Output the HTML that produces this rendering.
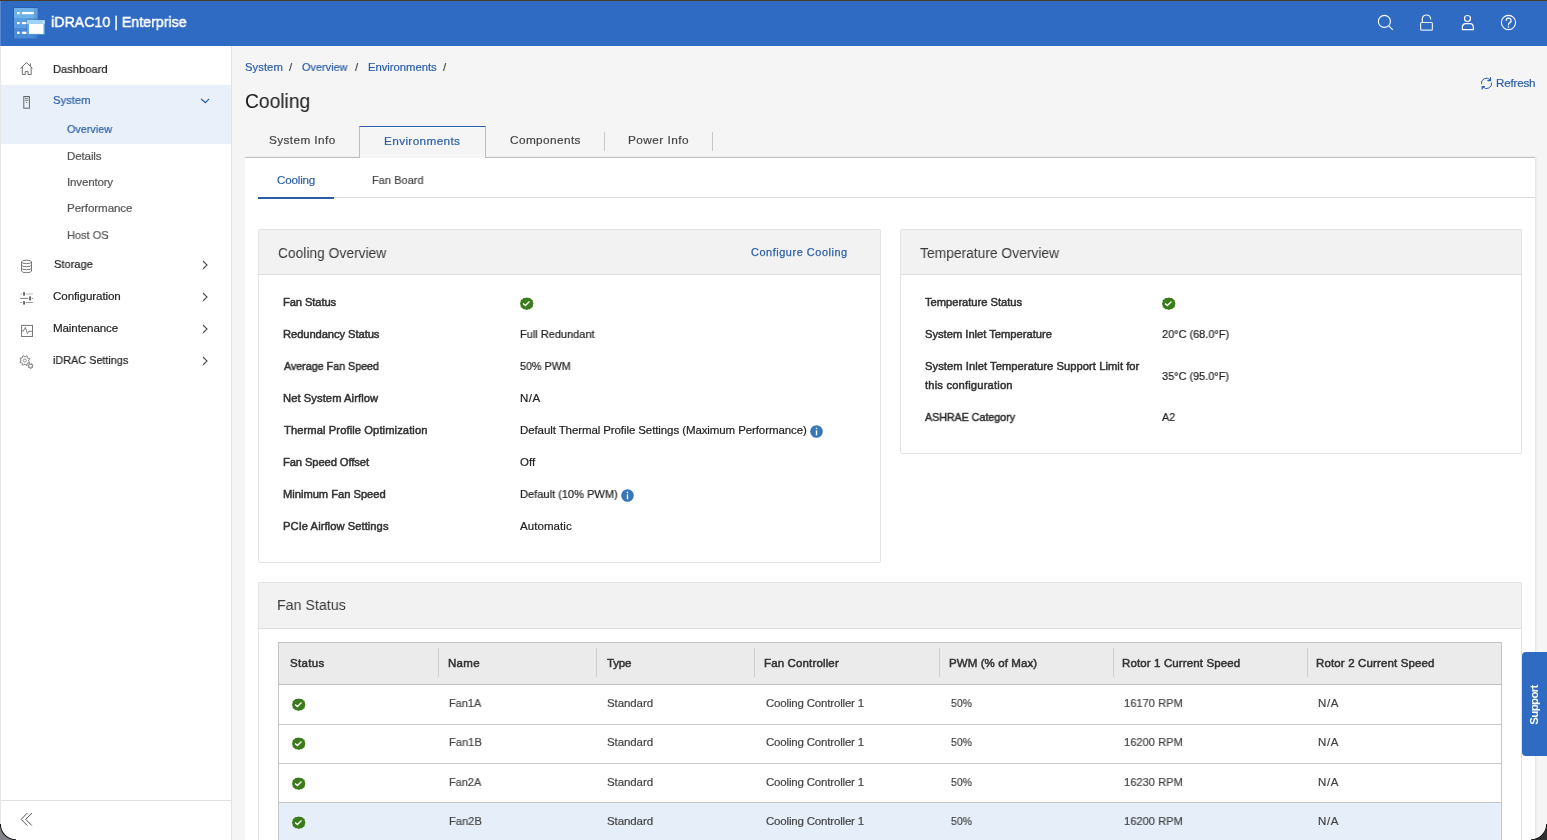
<!DOCTYPE html>
<html><head><meta charset="utf-8"><title>iDRAC10 Cooling</title>
<style>
html,body{margin:0;padding:0;width:1547px;height:840px;overflow:hidden;font-family:"Liberation Sans", sans-serif;}
.t{position:absolute;white-space:nowrap;will-change:transform;}
.r{position:absolute;}
svg.r{overflow:visible}
</style></head><body>
<div class="r" style="left:0px;top:0px;width:1547px;height:840px;background:#f5f5f5"></div>
<div class="r" style="left:0px;top:0px;width:1547px;height:1px;background:#4a3b26"></div>
<div class="r" style="left:0px;top:1px;width:1547px;height:45px;background:#2f6bc3"></div>
<div class="r" style="left:0px;top:46px;width:231px;height:794px;background:#fff;border-right:1px solid #e3e3e3"></div>
<div class="r" style="left:0px;top:46px;width:1px;height:794px;background:#e6e6e6"></div>
<div class="r" style="left:0px;top:1px;width:1px;height:45px;background:rgba(255,255,255,0.2)"></div>
<div class="r" style="left:1px;top:85px;width:230px;height:59px;background:#e9f0f9"></div>
<div class="r" style="left:1px;top:800px;width:230px;height:1px;background:#e0e0e0"></div>
<svg class="r" style="left:13px;top:7px" width="34" height="32" viewBox="0 0 34 32">
<rect x="0.4" y="0.4" width="24.4" height="31.4" fill="#2a5aa5"/>
<rect x="1" y="1" width="23.5" height="30.6" fill="#4a8ad6"/>
<rect x="1" y="1" width="23.5" height="10.3" fill="#6db1e9"/>
<rect x="1" y="11.3" width="23.5" height="9.7" fill="#5b9fe0"/>
<rect x="20.8" y="1" width="3.7" height="30.6" fill="#2a5aa5" fill-opacity="0.18"/>
<rect x="4" y="5" width="2.7" height="2.2" fill="#fff"/><rect x="8.9" y="5" width="12.1" height="2.2" fill="#fff"/>
<rect x="4" y="15" width="2.7" height="2.1" fill="#fff"/><rect x="8.9" y="15" width="4.6" height="2.1" fill="#fff"/>
<rect x="4" y="24.7" width="2.7" height="2.2" fill="#fff"/><rect x="8.9" y="24.7" width="4.6" height="2.2" fill="#fff"/>
<rect x="13.6" y="12.6" width="18.8" height="15.4" fill="#2a5aa5" fill-opacity="0.5"/>
<rect x="14" y="13" width="18" height="14.7" fill="#5da3e2"/>
<rect x="14" y="13" width="18" height="4" fill="#9fd2f4"/>
<rect x="29.2" y="14.5" width="2" height="1.7" fill="#c8e6fa"/>
<rect x="15.9" y="17" width="14.6" height="9.9" fill="#fff"/>
</svg>
<div class="t" style="left:50.9px;top:13px;font-size:15.5px;line-height:17px;color:#fff;-webkit-text-stroke:0.5px currentColor;transform:scaleX(0.9171);transform-origin:0 0;">iDRAC10 | Enterprise</div>
<svg class="r" style="left:1376px;top:14px" width="18" height="18" viewBox="0 0 18 18"><circle cx="8.4" cy="7.4" r="6.0" fill="none" stroke="#fff" stroke-width="1.1"/><line x1="12.6" y1="11.6" x2="16.8" y2="15.9" stroke="#fff" stroke-width="1.1"/></svg>
<svg class="r" style="left:1419px;top:14px" width="16" height="18" viewBox="0 0 16 18"><path d="M3.3 8.3 V4.9 A4.2 4.2 0 0 1 11.6 4.3 V5.6" fill="none" stroke="#fff" stroke-width="1.15"/><rect x="1.6" y="8.5" width="11.8" height="7.7" rx="1" fill="none" stroke="#fff" stroke-opacity="0.85" stroke-width="1.2"/></svg>
<svg class="r" style="left:1460px;top:14px" width="16" height="18" viewBox="0 0 16 18"><circle cx="7.5" cy="4.5" r="3.0" fill="none" stroke="#fff" stroke-width="1.15"/><path d="M2.4 15.6 V12.6 A3.4 3.4 0 0 1 5.6 9.6 H9.6 A3.4 3.4 0 0 1 13.3 12.6 V15.6 Z" fill="none" stroke="#fff" stroke-width="1.2"/></svg>
<svg class="r" style="left:1500px;top:14px" width="18" height="18" viewBox="0 0 18 18"><circle cx="8.5" cy="8.5" r="7.1" fill="none" stroke="#fff" stroke-width="1.1"/><path d="M6.3 6.8 A2.4 2.4 0 1 1 9.3 8.9 C8.6 9.3 8.4 9.7 8.4 11.3" fill="none" stroke="#fff" stroke-width="1.2"/><circle cx="8.4" cy="13.0" r="0.8" fill="#fff"/></svg>
<div class="t" style="left:53.08px;top:63px;font-size:11.6px;line-height:12px;color:#222;-webkit-text-stroke:0.2px currentColor;transform:scaleX(0.9629);transform-origin:0 0;">Dashboard</div>
<div class="t" style="left:53.49px;top:94px;font-size:11.6px;line-height:12px;color:#2b5ea8;-webkit-text-stroke:0.2px currentColor;transform:scaleX(0.9712);transform-origin:0 0;">System</div>
<div class="t" style="left:67.39px;top:123px;font-size:11.6px;line-height:12px;color:#2b5ea8;-webkit-text-stroke:0.2px currentColor;transform:scaleX(0.9308);transform-origin:0 0;">Overview</div>
<div class="t" style="left:66.75px;top:150px;font-size:11.6px;line-height:12px;color:#555;-webkit-text-stroke:0.2px currentColor;letter-spacing:-0.148px;">Details</div>
<div class="t" style="left:66.63px;top:176px;font-size:11.6px;line-height:12px;color:#555;-webkit-text-stroke:0.2px currentColor;letter-spacing:-0.19px;">Inventory</div>
<div class="t" style="left:66.75px;top:202px;font-size:11.6px;line-height:12px;color:#555;-webkit-text-stroke:0.2px currentColor;letter-spacing:-0.084px;">Performance</div>
<div class="t" style="left:66.79px;top:229px;font-size:11.6px;line-height:12px;color:#555;-webkit-text-stroke:0.2px currentColor;transform:scaleX(0.9518);transform-origin:0 0;">Host OS</div>
<div class="t" style="left:53.5px;top:258px;font-size:11.6px;line-height:12px;color:#222;-webkit-text-stroke:0.2px currentColor;transform:scaleX(0.9551);transform-origin:0 0;">Storage</div>
<div class="t" style="left:53.41px;top:290px;font-size:11.6px;line-height:12px;color:#222;-webkit-text-stroke:0.2px currentColor;letter-spacing:-0.096px;">Configuration</div>
<div class="t" style="left:53.05px;top:321.5px;font-size:11.6px;line-height:12px;color:#222;-webkit-text-stroke:0.2px currentColor;letter-spacing:-0.116px;">Maintenance</div>
<div class="t" style="left:53.27px;top:354px;font-size:11.6px;line-height:12px;color:#222;-webkit-text-stroke:0.2px currentColor;transform:scaleX(0.9348);transform-origin:0 0;">iDRAC Settings</div>
<svg class="r" style="left:20px;top:62px" width="14" height="14" viewBox="0 0 14 14"><path d="M0.5 6.3 L6.5 0.6 L12.5 6.3 M10.3 4.2 V1.3 M2.3 5 V12.5 H5.2 V9.6 H8.1 V12.5 H11.2 V5" fill="none" stroke="#666" stroke-width="0.95"/></svg>
<svg class="r" style="left:22px;top:95px" width="9" height="14" viewBox="0 0 9 14"><rect x="1.8" y="1.5" width="5.6" height="11.7" fill="none" stroke="#666" stroke-width="1"/><line x1="3" y1="3.3" x2="6.3" y2="3.3" stroke="#666" stroke-width="0.9"/><line x1="3" y1="5.3" x2="6.3" y2="5.3" stroke="#666" stroke-width="0.9"/><circle cx="4.6" cy="7.5" r="0.6" fill="#666"/></svg>
<svg class="r" style="left:199px;top:96px" width="12" height="8" viewBox="0 0 12 8"><path d="M2.1 3.0 L6.4 6.6 L10.1 2.9" fill="none" stroke="#2b5ea8" stroke-width="1.25"/></svg>
<svg class="r" style="left:201px;top:260px" width="8" height="10" viewBox="0 0 8 10"><path d="M2 1 L6 5 L2 9" fill="none" stroke="#555" stroke-width="1.2"/></svg>
<svg class="r" style="left:201px;top:292px" width="8" height="10" viewBox="0 0 8 10"><path d="M2 1 L6 5 L2 9" fill="none" stroke="#555" stroke-width="1.2"/></svg>
<svg class="r" style="left:201px;top:324px" width="8" height="10" viewBox="0 0 8 10"><path d="M2 1 L6 5 L2 9" fill="none" stroke="#555" stroke-width="1.2"/></svg>
<svg class="r" style="left:201px;top:356px" width="8" height="10" viewBox="0 0 8 10"><path d="M2 1 L6 5 L2 9" fill="none" stroke="#555" stroke-width="1.2"/></svg>
<svg class="r" style="left:20px;top:259px" width="13" height="15" viewBox="0 0 13 15"><ellipse cx="6.5" cy="2.9" rx="5" ry="1.7" fill="none" stroke="#777"/><path d="M1.5 2.9 V12 A5 1.7 0 0 0 11.5 12 V2.9 M1.5 6 A5 1.7 0 0 0 11.5 6 M1.5 9 A5 1.7 0 0 0 11.5 9" fill="none" stroke="#777"/></svg>
<svg class="r" style="left:20px;top:290px" width="14" height="16" viewBox="0 0 14 16"><path d="M0.2 4 H2.3 M5.8 4 H12.9" stroke="#bdbdbd" stroke-width="1" fill="none"/><path d="M0.2 8.4 H8.3 M11.8 8.4 H12.9" stroke="#7a7a7a" stroke-width="1" fill="none"/><path d="M0.2 12.5 H2.3 M5.8 12.5 H12.9" stroke="#999" stroke-width="1" fill="none"/><rect x="3.1" y="2" width="1.9" height="3.8" rx="0.7" fill="#666"/><rect x="9.1" y="6.2" width="1.9" height="4.3" rx="0.7" fill="#666"/><rect x="3.1" y="11" width="1.9" height="3.8" rx="0.7" fill="#666"/></svg>
<svg class="r" style="left:21px;top:324px" width="13" height="14" viewBox="0 0 13 14"><rect x="0.6" y="1.4" width="10.9" height="11.1" fill="none" stroke="#777" stroke-width="1"/><path d="M0.6 7.1 H2.3 L4.4 3.4 L6.4 9.7 L7.7 7.3 H11" fill="none" stroke="#777" stroke-width="0.95"/></svg>
<svg class="r" style="left:19px;top:354px" width="16" height="16" viewBox="0 0 16 16"><path d="M9.62 7.27 L10.55 8.06 L10.05 9.13 L8.85 8.93 L7.95 9.75 L8.05 10.96 L6.95 11.37 L6.24 10.37 L5.03 10.32 L4.24 11.25 L3.17 10.75 L3.37 9.55 L2.55 8.65 L1.34 8.75 L0.93 7.65 L1.93 6.94 L1.98 5.73 L1.05 4.94 L1.55 3.87 L2.75 4.07 L3.65 3.25 L3.55 2.04 L4.65 1.63 L5.36 2.63 L6.57 2.68 L7.36 1.75 L8.43 2.25 L8.23 3.45 L9.05 4.35 L10.26 4.25 L10.67 5.35 L9.67 6.06 Z" fill="none" stroke="#777" stroke-width="1"/><circle cx="5.8" cy="6.5" r="1.5" fill="none" stroke="#888" stroke-width="0.9"/><path d="M13.13 12.47 L13.87 13.05 L13.51 13.62 L12.67 13.19 L12.18 13.49 L12.19 14.43 L11.52 14.50 L11.34 13.58 L10.80 13.38 L10.07 13.98 L9.60 13.50 L10.20 12.78 L10.02 12.24 L9.10 12.04 L9.18 11.37 L10.12 11.39 L10.43 10.91 L10.01 10.07 L10.58 9.72 L11.15 10.46 L11.72 10.40 L12.12 9.56 L12.75 9.78 L12.52 10.69 L12.92 11.10 L13.84 10.88 L14.05 11.52 L13.20 11.91 Z" fill="#fff" stroke="#777" stroke-width="1"/></svg>
<svg class="r" style="left:20px;top:812px" width="14" height="15" viewBox="0 0 14 15"><path d="M7.4 1 L1.2 7.3 L7.4 13.6 M11.9 1 L5.7 7.3 L11.9 13.6" fill="none" stroke="#444" stroke-width="0.9"/></svg>
<div class="t" style="left:244.99px;top:61px;font-size:11.3px;line-height:12px;color:#2b5ea8;-webkit-text-stroke:0.2px currentColor;letter-spacing:0.037px;">System</div>
<div class="t" style="left:289.1px;top:61px;font-size:11.3px;line-height:12px;color:#444;-webkit-text-stroke:0.2px currentColor;letter-spacing:0.66px;">/</div>
<div class="t" style="left:302.18px;top:61px;font-size:11.3px;line-height:12px;color:#2b5ea8;-webkit-text-stroke:0.2px currentColor;transform:scaleX(0.964);transform-origin:0 0;">Overview</div>
<div class="t" style="left:354.6px;top:61px;font-size:11.3px;line-height:12px;color:#444;-webkit-text-stroke:0.2px currentColor;letter-spacing:0.66px;">/</div>
<div class="t" style="left:367.57px;top:61px;font-size:11.3px;line-height:12px;color:#2b5ea8;-webkit-text-stroke:0.2px currentColor;letter-spacing:-0.032px;">Environments</div>
<div class="t" style="left:442.8px;top:61px;font-size:11.3px;line-height:12px;color:#444;-webkit-text-stroke:0.2px currentColor;letter-spacing:0.66px;">/</div>
<div class="t" style="left:245.22px;top:89.6px;font-size:19.5px;line-height:22px;color:#1a1a1a;transform:scaleX(0.9862);transform-origin:0 0;">Cooling</div>
<svg class="r" style="left:1480px;top:76px" width="13" height="15" viewBox="0 0 13 15"><path d="M1.45 8.2 A5.1 5.1 0 0 1 10.1 3.7 M11.6 6.6 A5.1 5.1 0 0 1 2.9 11" fill="none" stroke="#2b5ea8" stroke-width="1.0"/><path d="M10.5 1.3 V4.6 H7.4" fill="none" stroke="#2b5ea8" stroke-width="1.2"/><path d="M2.2 13.6 V10.6 H4.9" fill="none" stroke="#2b5ea8" stroke-width="1.2"/></svg>
<div class="t" style="left:1496.15px;top:77px;font-size:11.6px;line-height:12px;color:#2b5ea8;-webkit-text-stroke:0.2px currentColor;letter-spacing:-0.185px;">Refresh</div>
<div class="r" style="left:245px;top:157px;width:1290px;height:683px;background:#fff;box-shadow:1px 0 2px rgba(0,0,0,0.08)"></div>
<div class="r" style="left:245px;top:157px;width:1290px;height:1px;background:#bdbdbd"></div>
<div class="r" style="left:359px;top:126px;width:127px;height:32px;background:#f5f5f5;border:1px solid #bdbdbd;border-top:1px solid #2b5ea8;border-bottom:none;box-sizing:border-box"></div>
<div class="r" style="left:360px;top:127px;width:125px;height:1px;background:#fff"></div>
<div class="t" style="left:269.26px;top:133.2px;font-size:11.8px;line-height:14px;color:#444;-webkit-text-stroke:0.2px currentColor;letter-spacing:0.393px;">System Info</div>
<div class="t" style="left:383.93px;top:134px;font-size:11.8px;line-height:14px;color:#2b5ea8;-webkit-text-stroke:0.2px currentColor;letter-spacing:0.35px;">Environments</div>
<div class="t" style="left:509.9px;top:133.2px;font-size:11.8px;line-height:14px;color:#444;-webkit-text-stroke:0.2px currentColor;letter-spacing:0.402px;">Components</div>
<div class="t" style="left:628.43px;top:133.2px;font-size:11.8px;line-height:14px;color:#444;-webkit-text-stroke:0.2px currentColor;letter-spacing:0.451px;">Power Info</div>
<div class="r" style="left:604px;top:132px;width:1px;height:19px;background:#c8c8c8"></div>
<div class="r" style="left:712px;top:132px;width:1px;height:19px;background:#c8c8c8"></div>
<div class="r" style="left:258px;top:197px;width:1277px;height:1px;background:#d9d9d9"></div>
<div class="r" style="left:258px;top:197px;width:76px;height:2px;background:#2b5ea8"></div>
<div class="t" style="left:277.01px;top:174.2px;font-size:11.6px;line-height:12px;color:#2b5ea8;-webkit-text-stroke:0.2px currentColor;letter-spacing:-0.167px;">Cooling</div>
<div class="t" style="left:372.09px;top:174.2px;font-size:11.6px;line-height:12px;color:#444;-webkit-text-stroke:0.2px currentColor;transform:scaleX(0.9513);transform-origin:0 0;">Fan Board</div>
<div class="r" style="left:258px;top:229px;width:623px;height:334px;background:#fff;border:1px solid #e3e3e3;border-radius:2px;box-sizing:border-box"></div>
<div class="r" style="left:258px;top:229px;width:623px;height:46px;background:#f2f2f2;border:1px solid #e3e3e3;border-bottom:1px solid #dedede;border-radius:2px 2px 0 0;box-sizing:border-box"></div>
<div class="r" style="left:900px;top:229px;width:622px;height:225px;background:#fff;border:1px solid #e3e3e3;border-radius:2px;box-sizing:border-box"></div>
<div class="r" style="left:900px;top:229px;width:622px;height:46px;background:#f2f2f2;border:1px solid #e3e3e3;border-bottom:1px solid #dedede;border-radius:2px 2px 0 0;box-sizing:border-box"></div>
<div class="r" style="left:258px;top:582px;width:1264px;height:300px;background:#fff;border:1px solid #e3e3e3;border-radius:2px;box-sizing:border-box"></div>
<div class="r" style="left:258px;top:582px;width:1264px;height:47px;background:#f2f2f2;border:1px solid #e3e3e3;border-bottom:1px solid #dedede;border-radius:2px 2px 0 0;box-sizing:border-box"></div>
<div class="t" style="left:277.7px;top:243.7px;font-size:15.3px;line-height:17px;color:#3a3a3a;transform:scaleX(0.903);transform-origin:0 0;">Cooling Overview</div>
<div class="t" style="left:750.57px;top:246.2px;font-size:10.9px;line-height:12px;color:#2b5ea8;-webkit-text-stroke:0.25px currentColor;letter-spacing:0.56px;">Configure Cooling</div>
<div class="t" style="left:920.39px;top:243.7px;font-size:15.3px;line-height:17px;color:#3a3a3a;transform:scaleX(0.9041);transform-origin:0 0;">Temperature Overview</div>
<div class="t" style="left:277.13px;top:596px;font-size:15.3px;line-height:17px;color:#3a3a3a;transform:scaleX(0.931);transform-origin:0 0;">Fan Status</div>
<div class="t" style="left:283.03px;top:295.7px;font-size:11.2px;line-height:12px;color:#333;-webkit-text-stroke:0.5px currentColor;letter-spacing:-0.104px;">Fan Status</div>
<div class="t" style="left:283.03px;top:327.7px;font-size:11.2px;line-height:12px;color:#333;-webkit-text-stroke:0.5px currentColor;letter-spacing:-0.077px;">Redundancy Status</div>
<div class="t" style="left:519.6px;top:328px;font-size:11.5px;line-height:12px;color:#222;-webkit-text-stroke:0.2px currentColor;transform:scaleX(0.9557);transform-origin:0 0;">Full Redundant</div>
<div class="t" style="left:283.93px;top:359.7px;font-size:11.2px;line-height:12px;color:#333;-webkit-text-stroke:0.5px currentColor;transform:scaleX(0.9559);transform-origin:0 0;">Average Fan Speed</div>
<div class="t" style="left:520.07px;top:360px;font-size:11.5px;line-height:12px;color:#222;-webkit-text-stroke:0.2px currentColor;transform:scaleX(0.932);transform-origin:0 0;">50% PWM</div>
<div class="t" style="left:283.03px;top:391.7px;font-size:11.2px;line-height:12px;color:#333;-webkit-text-stroke:0.5px currentColor;letter-spacing:0.07px;">Net System Airflow</div>
<div class="t" style="left:519.56px;top:392px;font-size:11.5px;line-height:12px;color:#222;-webkit-text-stroke:0.2px currentColor;letter-spacing:0.548px;">N/A</div>
<div class="t" style="left:283.7px;top:423.7px;font-size:11.2px;line-height:12px;color:#333;-webkit-text-stroke:0.5px currentColor;letter-spacing:0.085px;">Thermal Profile Optimization</div>
<div class="t" style="left:519.56px;top:424px;font-size:11.5px;line-height:12px;color:#222;-webkit-text-stroke:0.2px currentColor;letter-spacing:-0.096px;">Default Thermal Profile Settings (Maximum Performance)</div>
<div class="t" style="left:283.03px;top:455.7px;font-size:11.2px;line-height:12px;color:#333;-webkit-text-stroke:0.5px currentColor;letter-spacing:-0.099px;">Fan Speed Offset</div>
<div class="t" style="left:519.96px;top:456px;font-size:11.5px;line-height:12px;color:#222;-webkit-text-stroke:0.2px currentColor;letter-spacing:-0.004px;">Off</div>
<div class="t" style="left:283.03px;top:487.7px;font-size:11.2px;line-height:12px;color:#333;-webkit-text-stroke:0.5px currentColor;letter-spacing:-0.031px;">Minimum Fan Speed</div>
<div class="t" style="left:519.59px;top:488px;font-size:11.5px;line-height:12px;color:#222;-webkit-text-stroke:0.2px currentColor;transform:scaleX(0.9625);transform-origin:0 0;">Default (10% PWM)</div>
<div class="t" style="left:283.03px;top:519.7px;font-size:11.2px;line-height:12px;color:#333;-webkit-text-stroke:0.5px currentColor;letter-spacing:0.051px;">PCIe Airflow Settings</div>
<div class="t" style="left:520.48px;top:520px;font-size:11.5px;line-height:12px;color:#222;-webkit-text-stroke:0.2px currentColor;letter-spacing:0.062px;">Automatic</div>
<svg class="r" style="left:520px;top:297px" width="13" height="13" viewBox="0 0 13 13"><path d="M6.5 0.3 L8.1 0.9 L9.8 0.9 L10.9 2.1 L12.4 2.9 L12.6 4.6 L13.2 6.5 L12.6 8.4 L12.4 10.1 L10.9 10.9 L9.8 12.1 L8.1 12.1 L6.5 12.7 L4.9 12.1 L3.2 12.1 L2.1 10.9 L0.6 10.1 L0.4 8.4 L-0.2 6.5 L0.4 4.6 L0.6 2.9 L2.1 2.1 L3.2 0.9 L4.9 0.9 Z" transform="translate(0.2 0.2)" fill="#3a7b1c"/><path d="M3.1 6.4 L5.4 8.6 L9.5 4.6" fill="none" stroke="#fff" stroke-width="1.35"/></svg>
<svg class="r" style="left:810px;top:425px" width="13" height="13" viewBox="0 0 13 13"><circle cx="6.5" cy="6.5" r="6.3" fill="#3876ba"/><rect x="5.8" y="5.3" width="1.4" height="5" fill="#fff"/><rect x="5.8" y="2.7" width="1.4" height="1.5" fill="#fff"/></svg>
<svg class="r" style="left:621px;top:489px" width="13" height="13" viewBox="0 0 13 13"><circle cx="6.5" cy="6.5" r="6.3" fill="#3876ba"/><rect x="5.8" y="5.3" width="1.4" height="5" fill="#fff"/><rect x="5.8" y="2.7" width="1.4" height="1.5" fill="#fff"/></svg>
<div class="t" style="left:925.1px;top:296px;font-size:11.2px;line-height:12px;color:#333;-webkit-text-stroke:0.5px currentColor;letter-spacing:-0.037px;">Temperature Status</div>
<div class="t" style="left:924.84px;top:328px;font-size:11.2px;line-height:12px;color:#333;-webkit-text-stroke:0.5px currentColor;letter-spacing:-0.015px;">System Inlet Temperature</div>
<div class="t" style="left:1161.85px;top:328px;font-size:11.5px;line-height:12px;color:#222;-webkit-text-stroke:0.2px currentColor;transform:scaleX(0.9516);transform-origin:0 0;">20°C (68.0°F)</div>
<div class="t" style="left:924.84px;top:360.3px;font-size:11.2px;line-height:12px;color:#333;-webkit-text-stroke:0.5px currentColor;letter-spacing:0.046px;">System Inlet Temperature Support Limit for</div>
<div class="t" style="left:925.18px;top:378.8px;font-size:11.2px;line-height:12px;color:#333;-webkit-text-stroke:0.5px currentColor;letter-spacing:0.172px;">this configuration</div>
<div class="t" style="left:1161.98px;top:370.1px;font-size:11.5px;line-height:12px;color:#222;-webkit-text-stroke:0.2px currentColor;transform:scaleX(0.9497);transform-origin:0 0;">35°C (95.0°F)</div>
<div class="t" style="left:925.33px;top:411px;font-size:11.2px;line-height:12px;color:#333;-webkit-text-stroke:0.5px currentColor;transform:scaleX(0.9519);transform-origin:0 0;">ASHRAE Category</div>
<div class="t" style="left:1162.38px;top:411px;font-size:11.5px;line-height:12px;color:#222;-webkit-text-stroke:0.2px currentColor;transform:scaleX(0.9367);transform-origin:0 0;">A2</div>
<svg class="r" style="left:1162px;top:297px" width="13" height="13" viewBox="0 0 13 13"><path d="M6.5 0.3 L8.1 0.9 L9.8 0.9 L10.9 2.1 L12.4 2.9 L12.6 4.6 L13.2 6.5 L12.6 8.4 L12.4 10.1 L10.9 10.9 L9.8 12.1 L8.1 12.1 L6.5 12.7 L4.9 12.1 L3.2 12.1 L2.1 10.9 L0.6 10.1 L0.4 8.4 L-0.2 6.5 L0.4 4.6 L0.6 2.9 L2.1 2.1 L3.2 0.9 L4.9 0.9 Z" transform="translate(0.2 0.2)" fill="#3a7b1c"/><path d="M3.1 6.4 L5.4 8.6 L9.5 4.6" fill="none" stroke="#fff" stroke-width="1.35"/></svg>
<div class="r" style="left:278px;top:642px;width:1224px;height:200px;background:#fff;border:1px solid #c4c4c4;box-sizing:border-box"></div>
<div class="r" style="left:278px;top:642px;width:1224px;height:43px;background:#ebebeb;border:1px solid #c4c4c4;border-bottom:1px solid #bdbdbd;box-sizing:border-box"></div>
<div class="r" style="left:438px;top:648px;width:1px;height:29px;background:#cfcfcf"></div>
<div class="r" style="left:596px;top:648px;width:1px;height:29px;background:#cfcfcf"></div>
<div class="r" style="left:754px;top:648px;width:1px;height:29px;background:#cfcfcf"></div>
<div class="r" style="left:939px;top:648px;width:1px;height:29px;background:#cfcfcf"></div>
<div class="r" style="left:1113px;top:648px;width:1px;height:29px;background:#cfcfcf"></div>
<div class="r" style="left:1307px;top:648px;width:1px;height:29px;background:#cfcfcf"></div>
<div class="t" style="left:289.93px;top:657px;font-size:11.5px;line-height:12px;color:#333;-webkit-text-stroke:0.5px currentColor;letter-spacing:0.327px;">Status</div>
<div class="t" style="left:447.61px;top:657px;font-size:11.5px;line-height:12px;color:#333;-webkit-text-stroke:0.5px currentColor;letter-spacing:0.293px;">Name</div>
<div class="t" style="left:606.79px;top:657px;font-size:11.5px;line-height:12px;color:#333;-webkit-text-stroke:0.5px currentColor;letter-spacing:-0.199px;">Type</div>
<div class="t" style="left:763.91px;top:657px;font-size:11.5px;line-height:12px;color:#333;-webkit-text-stroke:0.5px currentColor;letter-spacing:0.144px;">Fan Controller</div>
<div class="t" style="left:948.91px;top:657px;font-size:11.5px;line-height:12px;color:#333;-webkit-text-stroke:0.5px currentColor;letter-spacing:0.09px;">PWM (% of Max)</div>
<div class="t" style="left:1122.11px;top:657px;font-size:11.5px;line-height:12px;color:#333;-webkit-text-stroke:0.5px currentColor;letter-spacing:0.124px;">Rotor 1 Current Speed</div>
<div class="t" style="left:1316.31px;top:657px;font-size:11.5px;line-height:12px;color:#333;-webkit-text-stroke:0.5px currentColor;letter-spacing:0.139px;">Rotor 2 Current Speed</div>
<div class="r" style="left:278px;top:802px;width:1224px;height:40px;background:#e6eff9"></div>
<div class="r" style="left:278px;top:724px;width:1224px;height:1px;background:#c8c8c8"></div>
<div class="r" style="left:278px;top:763px;width:1224px;height:1px;background:#c8c8c8"></div>
<div class="r" style="left:278px;top:802px;width:1224px;height:1px;background:#c8c8c8"></div>
<div class="r" style="left:278px;top:642px;width:1px;height:200px;background:#c4c4c4"></div>
<div class="r" style="left:1501px;top:642px;width:1px;height:200px;background:#c4c4c4"></div>
<svg class="r" style="left:292px;top:697.8px" width="13" height="13" viewBox="0 0 13 13"><path d="M6.5 0.3 L8.1 0.9 L9.8 0.9 L10.9 2.1 L12.4 2.9 L12.6 4.6 L13.2 6.5 L12.6 8.4 L12.4 10.1 L10.9 10.9 L9.8 12.1 L8.1 12.1 L6.5 12.7 L4.9 12.1 L3.2 12.1 L2.1 10.9 L0.6 10.1 L0.4 8.4 L-0.2 6.5 L0.4 4.6 L0.6 2.9 L2.1 2.1 L3.2 0.9 L4.9 0.9 Z" transform="translate(0.2 0.2)" fill="#3a7b1c"/><path d="M3.1 6.4 L5.4 8.6 L9.5 4.6" fill="none" stroke="#fff" stroke-width="1.35"/></svg>
<div class="t" style="left:449.2px;top:697.3px;font-size:11.5px;line-height:12px;color:#444;-webkit-text-stroke:0.2px currentColor;transform:scaleX(0.9512);transform-origin:0 0;">Fan1A</div>
<div class="t" style="left:607.38px;top:697.3px;font-size:11.5px;line-height:12px;color:#444;-webkit-text-stroke:0.2px currentColor;letter-spacing:-0.087px;">Standard</div>
<div class="t" style="left:765.82px;top:697.3px;font-size:11.5px;line-height:12px;color:#444;-webkit-text-stroke:0.2px currentColor;letter-spacing:-0.184px;">Cooling Controller 1</div>
<div class="t" style="left:951.28px;top:697.3px;font-size:11.5px;line-height:12px;color:#444;-webkit-text-stroke:0.2px currentColor;transform:scaleX(0.9129);transform-origin:0 0;">50%</div>
<div class="t" style="left:1124.05px;top:697.3px;font-size:11.5px;line-height:12px;color:#444;-webkit-text-stroke:0.2px currentColor;transform:scaleX(0.9677);transform-origin:0 0;">16170 RPM</div>
<div class="t" style="left:1317.76px;top:697.3px;font-size:11.5px;line-height:12px;color:#444;-webkit-text-stroke:0.2px currentColor;letter-spacing:0.598px;">N/A</div>
<svg class="r" style="left:292px;top:736.7px" width="13" height="13" viewBox="0 0 13 13"><path d="M6.5 0.3 L8.1 0.9 L9.8 0.9 L10.9 2.1 L12.4 2.9 L12.6 4.6 L13.2 6.5 L12.6 8.4 L12.4 10.1 L10.9 10.9 L9.8 12.1 L8.1 12.1 L6.5 12.7 L4.9 12.1 L3.2 12.1 L2.1 10.9 L0.6 10.1 L0.4 8.4 L-0.2 6.5 L0.4 4.6 L0.6 2.9 L2.1 2.1 L3.2 0.9 L4.9 0.9 Z" transform="translate(0.2 0.2)" fill="#3a7b1c"/><path d="M3.1 6.4 L5.4 8.6 L9.5 4.6" fill="none" stroke="#fff" stroke-width="1.35"/></svg>
<div class="t" style="left:449.19px;top:736.2px;font-size:11.5px;line-height:12px;color:#444;-webkit-text-stroke:0.2px currentColor;transform:scaleX(0.9683);transform-origin:0 0;">Fan1B</div>
<div class="t" style="left:607.38px;top:736.2px;font-size:11.5px;line-height:12px;color:#444;-webkit-text-stroke:0.2px currentColor;letter-spacing:-0.087px;">Standard</div>
<div class="t" style="left:765.82px;top:736.2px;font-size:11.5px;line-height:12px;color:#444;-webkit-text-stroke:0.2px currentColor;letter-spacing:-0.184px;">Cooling Controller 1</div>
<div class="t" style="left:951.28px;top:736.2px;font-size:11.5px;line-height:12px;color:#444;-webkit-text-stroke:0.2px currentColor;transform:scaleX(0.9129);transform-origin:0 0;">50%</div>
<div class="t" style="left:1124.05px;top:736.2px;font-size:11.5px;line-height:12px;color:#444;-webkit-text-stroke:0.2px currentColor;transform:scaleX(0.9677);transform-origin:0 0;">16200 RPM</div>
<div class="t" style="left:1317.76px;top:736.2px;font-size:11.5px;line-height:12px;color:#444;-webkit-text-stroke:0.2px currentColor;letter-spacing:0.598px;">N/A</div>
<svg class="r" style="left:292px;top:776.5px" width="13" height="13" viewBox="0 0 13 13"><path d="M6.5 0.3 L8.1 0.9 L9.8 0.9 L10.9 2.1 L12.4 2.9 L12.6 4.6 L13.2 6.5 L12.6 8.4 L12.4 10.1 L10.9 10.9 L9.8 12.1 L8.1 12.1 L6.5 12.7 L4.9 12.1 L3.2 12.1 L2.1 10.9 L0.6 10.1 L0.4 8.4 L-0.2 6.5 L0.4 4.6 L0.6 2.9 L2.1 2.1 L3.2 0.9 L4.9 0.9 Z" transform="translate(0.2 0.2)" fill="#3a7b1c"/><path d="M3.1 6.4 L5.4 8.6 L9.5 4.6" fill="none" stroke="#fff" stroke-width="1.35"/></svg>
<div class="t" style="left:449.2px;top:776px;font-size:11.5px;line-height:12px;color:#444;-webkit-text-stroke:0.2px currentColor;transform:scaleX(0.9512);transform-origin:0 0;">Fan2A</div>
<div class="t" style="left:607.38px;top:776px;font-size:11.5px;line-height:12px;color:#444;-webkit-text-stroke:0.2px currentColor;letter-spacing:-0.087px;">Standard</div>
<div class="t" style="left:765.82px;top:776px;font-size:11.5px;line-height:12px;color:#444;-webkit-text-stroke:0.2px currentColor;letter-spacing:-0.184px;">Cooling Controller 1</div>
<div class="t" style="left:951.28px;top:776px;font-size:11.5px;line-height:12px;color:#444;-webkit-text-stroke:0.2px currentColor;transform:scaleX(0.9129);transform-origin:0 0;">50%</div>
<div class="t" style="left:1124.05px;top:776px;font-size:11.5px;line-height:12px;color:#444;-webkit-text-stroke:0.2px currentColor;transform:scaleX(0.9677);transform-origin:0 0;">16230 RPM</div>
<div class="t" style="left:1317.76px;top:776px;font-size:11.5px;line-height:12px;color:#444;-webkit-text-stroke:0.2px currentColor;letter-spacing:0.598px;">N/A</div>
<svg class="r" style="left:292px;top:815.5px" width="13" height="13" viewBox="0 0 13 13"><path d="M6.5 0.3 L8.1 0.9 L9.8 0.9 L10.9 2.1 L12.4 2.9 L12.6 4.6 L13.2 6.5 L12.6 8.4 L12.4 10.1 L10.9 10.9 L9.8 12.1 L8.1 12.1 L6.5 12.7 L4.9 12.1 L3.2 12.1 L2.1 10.9 L0.6 10.1 L0.4 8.4 L-0.2 6.5 L0.4 4.6 L0.6 2.9 L2.1 2.1 L3.2 0.9 L4.9 0.9 Z" transform="translate(0.2 0.2)" fill="#3a7b1c"/><path d="M3.1 6.4 L5.4 8.6 L9.5 4.6" fill="none" stroke="#fff" stroke-width="1.35"/></svg>
<div class="t" style="left:449.19px;top:815px;font-size:11.5px;line-height:12px;color:#444;-webkit-text-stroke:0.2px currentColor;transform:scaleX(0.9683);transform-origin:0 0;">Fan2B</div>
<div class="t" style="left:607.38px;top:815px;font-size:11.5px;line-height:12px;color:#444;-webkit-text-stroke:0.2px currentColor;letter-spacing:-0.087px;">Standard</div>
<div class="t" style="left:765.82px;top:815px;font-size:11.5px;line-height:12px;color:#444;-webkit-text-stroke:0.2px currentColor;letter-spacing:-0.184px;">Cooling Controller 1</div>
<div class="t" style="left:951.28px;top:815px;font-size:11.5px;line-height:12px;color:#444;-webkit-text-stroke:0.2px currentColor;transform:scaleX(0.9129);transform-origin:0 0;">50%</div>
<div class="t" style="left:1124.05px;top:815px;font-size:11.5px;line-height:12px;color:#444;-webkit-text-stroke:0.2px currentColor;transform:scaleX(0.9677);transform-origin:0 0;">16200 RPM</div>
<div class="t" style="left:1317.76px;top:815px;font-size:11.5px;line-height:12px;color:#444;-webkit-text-stroke:0.2px currentColor;letter-spacing:0.598px;">N/A</div>
<div class="r" style="left:1522px;top:652px;width:25px;height:104px;background:#2f6bc3;border-radius:4px 0 0 4px"></div>
<div class="t" style="left:1522px;top:652px;width:25px;height:104px;"><div style="position:absolute;left:12px;top:52.5px;transform:translate(-50%,-50%) rotate(-90deg);font-size:11.5px;font-weight:700;color:#fff;letter-spacing:-0.65px;line-height:12px">Support</div></div>
<svg class="r" style="left:0px;top:824px" width="16" height="16" viewBox="0 0 16 16"><path d="M0 0 V16 H16 A16 16 0 0 1 0 0 Z" fill="#86848b"/><path d="M0.3 0 A15.7 15.7 0 0 0 16 15.7" fill="none" stroke="#111" stroke-width="1.1"/></svg>
<svg class="r" style="left:1531px;top:824px" width="16" height="16" viewBox="0 0 16 16"><path d="M16 0 V16 H0 A16 16 0 0 0 16 0 Z" fill="#303030"/><path d="M15.7 0 A15.7 15.7 0 0 1 0 15.7" fill="none" stroke="#111" stroke-width="1.1"/></svg>
</body></html>
